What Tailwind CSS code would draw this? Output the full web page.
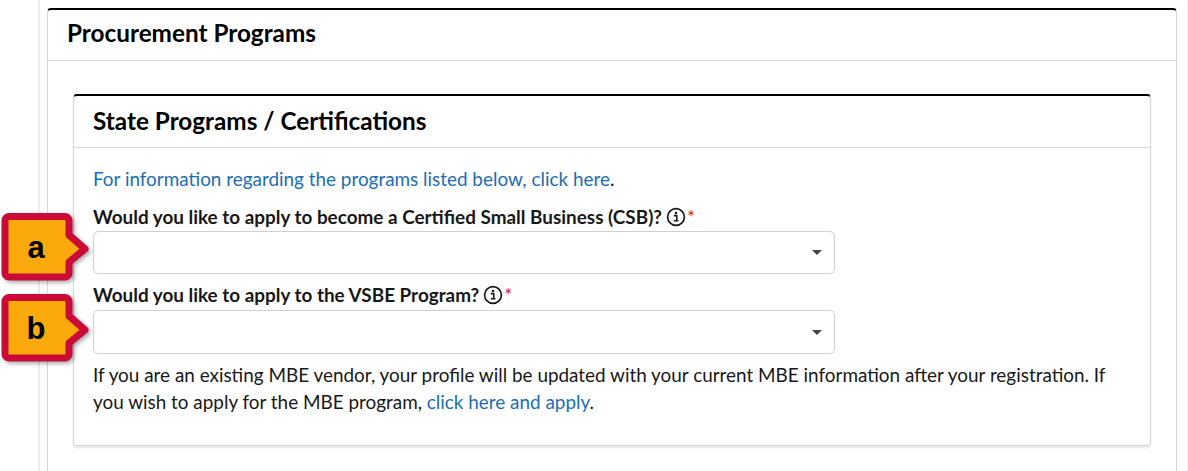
<!DOCTYPE html>
<html lang="en">
<head>
  <meta charset="UTF-8" />
  <title>Procurement Programs</title>
  <script src="https://cdn.jsdelivr.net/npm/@tailwindcss/browser@4"></script>
</head>
<body class="bg-white h-[471px] overflow-hidden relative font-['Lato',sans-serif] text-[#181818]">

  <!-- page gutters -->
  <div class="h-full pl-[38px] pr-0 flex">
    <div class="w-[2px] bg-[#ececec]"></div>
    <div class="flex-1 pl-[7px] pr-[10px] pt-2">

      <!-- Outer card -->
      <div class="border border-[#d8d8d8] border-t-2 border-t-black rounded-t-[4px] h-[480px] bg-white">
        <div class="h-[51px] border-b border-[#d8d8d8] pl-[19px] flex items-center">
          <h2 class="text-[24.3px] font-bold text-black pb-[3px]">Procurement Programs</h2>
        </div>

        <div class="pt-[33px] px-[25px]">
          <!-- Inner card -->
          <div class="border border-[#d8d8d8] border-t-2 border-t-black rounded-[4px] h-[352px] shadow-[0_2px_2px_rgba(0,0,0,0.1)]">
            <div class="h-[52px] border-b border-[#d8d8d8] pl-[19px] flex items-center">
              <h3 class="text-[24.3px] font-bold text-black">State Programs / Certifications</h3>
            </div>

            <div class="px-[19px] text-[18.9px] leading-[27px]">
              <p class="pt-[17px] h-[59px]"><a class="text-[#1b6eb5]">For information regarding the programs listed below, click here</a>.</p>

              <div class="mt-[-4px]">
                <label class="flex items-center font-bold h-[28px] pb-[1px]">Would you like to apply to become a Certified Small Business (CSB)?
                  <svg class="ml-[4px]" width="20" height="20" viewBox="0 0 19 19" fill="none"><circle cx="9.5" cy="9.5" r="8" stroke="#181818" stroke-width="1.6"/><circle cx="9.5" cy="5.6" r="1.2" fill="#181818"/><path d="M7.4 8.2h2.8v4.6M7.4 13h4.4" stroke="#181818" stroke-width="1.5"/></svg>
                  <span class="text-[#d8232a] font-normal ml-[1px]">*</span>
                </label>
                <div class="w-[742px] h-[43px] border border-[#d0d0d0] rounded-[5px] flex items-center justify-end pr-[12px]">
                  <span class="w-0 h-0 border-x-[5px] border-x-transparent border-t-[5px] border-t-[#444]"></span>
                </div>
              </div>

              <div class="mt-[8px]">
                <label class="flex items-center font-bold h-[28px] pb-[3px]">Would you like to apply to the VSBE Program?
                  <svg class="ml-[4px]" width="20" height="20" viewBox="0 0 19 19" fill="none"><circle cx="9.5" cy="9.5" r="8" stroke="#181818" stroke-width="1.6"/><circle cx="9.5" cy="5.6" r="1.2" fill="#181818"/><path d="M7.4 8.2h2.8v4.6M7.4 13h4.4" stroke="#181818" stroke-width="1.5"/></svg>
                  <span class="text-[#d8232a] font-normal ml-[1px]">*</span>
                </label>
                <div class="w-[742px] h-[44px] border border-[#d0d0d0] rounded-[5px] flex items-center justify-end pr-[12px]">
                  <span class="w-0 h-0 border-x-[5px] border-x-transparent border-t-[5px] border-t-[#444]"></span>
                </div>
              </div>

              <p class="mt-[7px]">If you are an existing MBE vendor, your profile will be updated with your current MBE information after your registration. If you wish to apply for the MBE program, <a class="text-[#1b6eb5]">click here and apply</a>.</p>
            </div>
          </div>
        </div>
      </div>
    </div>
    <div class="w-px bg-[#ececec]"></div>
  </div>

  <!-- Callout a -->
  <div class="absolute left-0 top-[210px] w-[96px] h-[76px]">
    <svg class="absolute inset-0 drop-shadow-[2px_2px_2px_rgba(0,0,0,0.35)]" width="96" height="76" viewBox="0 0 96 76">
      <path d="M9 6.5H65a4 4 0 0 1 4 4V25L85 39L69 52V63a4 4 0 0 1-4 4H9a4 4 0 0 1-4-4V10.5a4 4 0 0 1 4-4Z" fill="#fcaa0b" stroke="#cc0a37" stroke-width="7" stroke-linejoin="round"/>
    </svg>
    <span class="absolute left-[5px] w-[62px] top-[18px] text-center font-['Liberation_Sans',sans-serif] font-bold text-[31px] leading-[40px] text-black">a</span>
  </div>

  <!-- Callout b -->
  <div class="absolute left-0 top-[291px] w-[96px] h-[76px]">
    <svg class="absolute inset-0 drop-shadow-[2px_2px_2px_rgba(0,0,0,0.35)]" width="96" height="76" viewBox="0 0 96 76">
      <path d="M9 6.5H65a4 4 0 0 1 4 4V25L85 39L69 52V63a4 4 0 0 1-4 4H9a4 4 0 0 1-4-4V10.5a4 4 0 0 1 4-4Z" fill="#fcaa0b" stroke="#cc0a37" stroke-width="7" stroke-linejoin="round"/>
    </svg>
    <span class="absolute left-[5px] w-[62px] top-[18px] text-center font-['Liberation_Sans',sans-serif] font-bold text-[31px] leading-[40px] text-black">b</span>
  </div>

</body>
</html>
